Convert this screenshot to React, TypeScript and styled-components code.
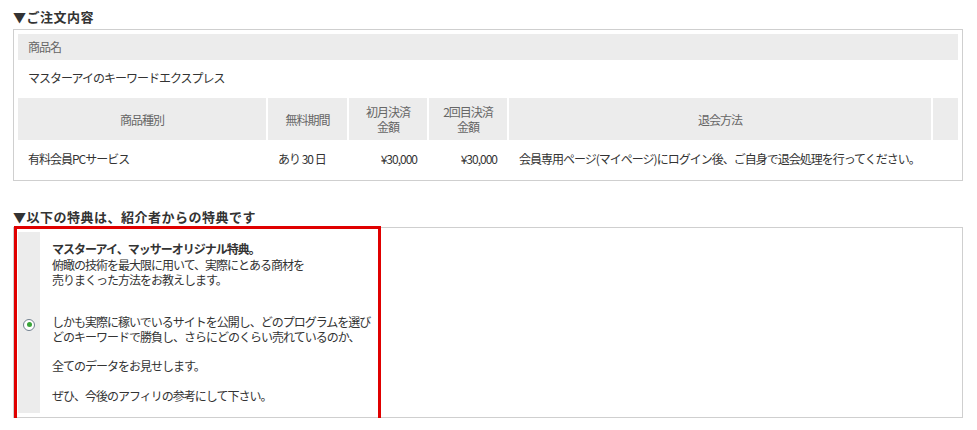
import React, { FC } from "react";
import styled, { createGlobalStyle } from "styled-components";

const GlobalStyle = createGlobalStyle`
  body {
    margin: 0;
    background: #fff;
    color: #333;
    font-family: "Noto Sans CJK JP", "Liberation Sans", sans-serif;
    font-size: 12px;
  }
`;

interface PlanRow {
  kind: string;
  free: string;
  first: string;
  second: string;
  cancel: string;
}

const plan: PlanRow = {
  kind: "有料会員PCサービス",
  free: "あり 30 日",
  first: "¥30,000",
  second: "¥30,000",
  cancel: "会員専用ページ(マイページ)にログイン後、ご自身で退会処理を行ってください。",
};

const Page = styled.div`
  width: 950px;
  padding: 9px 0 0 13px;
`;

const SectionTitle = styled.h2`
  margin: 0;
  height: 20px;
  font-size: 13px;
  line-height: 16px;
  font-weight: bold;
  letter-spacing: 0.5px;
  color: #333;
`;

const Box = styled.div`
  border: 1px solid #cfcfcf;
  padding: 4px;
`;

const OrderBox = styled(Box)`
  margin-bottom: 28px;
`;

const NameHead = styled.div`
  height: 26px;
  padding-left: 10px;
  background: #ececec;
  color: #666;
  line-height: 26px;
  letter-spacing: -1px;
`;

const NameValue = styled.div`
  height: 38px;
  padding-left: 10px;
  line-height: 36px;
  letter-spacing: -1px;
`;

const PlanGrid = styled.div`
  display: grid;
  grid-template-columns: 248px 79px 78px 78px 422px 1fr;
  column-gap: 2px;
`;

const HeadCell = styled.div`
  height: 42px;
  display: flex;
  align-items: center;
  justify-content: center;
  text-align: center;
  background: #ececec;
  color: #666;
  line-height: 15px;
  letter-spacing: -1px;
`;

const DataCell = styled.div<{ $right?: boolean }>`
  height: 36px;
  display: flex;
  align-items: center;
  justify-content: ${(p) => (p.$right ? "flex-end" : "flex-start")};
  padding: 0 10px;
  white-space: nowrap;
  letter-spacing: -1px;
`;

const PerkBox = styled(Box)`
  position: relative;
  margin-top: -2px;
`;

const PerkRow = styled.div`
  display: flex;
`;

const RadioCell = styled.div`
  width: 22px;
  flex-shrink: 0;
  display: flex;
  align-items: center;
  justify-content: center;
  background: #ececec;
`;

const Radio = styled.span`
  width: 12px;
  height: 12px;
  box-sizing: border-box;
  border: 1px solid #71808f;
  border-radius: 50%;
  background: #fff;
  display: flex;
  align-items: center;
  justify-content: center;
  margin-top: 4px;

  &::after {
    content: "";
    width: 5px;
    height: 5px;
    border-radius: 50%;
    background: #3aa53a;
  }
`;

const PerkText = styled.div`
  padding: 9px 0 10px 12px;
  line-height: 15px;
  letter-spacing: -1px;
`;

const Para = styled.p<{ $gap: number }>`
  margin: ${(p) => p.$gap}px 0 0;
`;

const Lead = styled.strong`
  display: block;
  line-height: 17px;
  margin-top: -1px;
`;

// red highlight drawn over the perk block
const Highlight = styled.div`
  position: absolute;
  box-sizing: border-box;
  left: 0;
  top: -2px;
  width: 367px;
  height: 198px;
  border: 3px solid #e00000;
  pointer-events: none;
`;

const App: FC = () => {
  return (
    <>
      <GlobalStyle />
      <Page>
        <SectionTitle>▼ご注文内容</SectionTitle>
        <OrderBox>
          <NameHead>商品名</NameHead>
          <NameValue>マスターアイのキーワードエクスプレス</NameValue>
          <PlanGrid>
            <HeadCell>商品種別</HeadCell>
            <HeadCell>無料期間</HeadCell>
            <HeadCell>
              初月決済
              <br />
              金額
            </HeadCell>
            <HeadCell>
              2回目決済
              <br />
              金額
            </HeadCell>
            <HeadCell>退会方法</HeadCell>
            <HeadCell />
            <DataCell>{plan.kind}</DataCell>
            <DataCell>{plan.free}</DataCell>
            <DataCell $right>{plan.first}</DataCell>
            <DataCell $right>{plan.second}</DataCell>
            <DataCell>{plan.cancel}</DataCell>
            <DataCell />
          </PlanGrid>
        </OrderBox>

        <SectionTitle>▼以下の特典は、紹介者からの特典です</SectionTitle>
        <PerkBox>
          <PerkRow>
            <RadioCell>
              <Radio />
            </RadioCell>
            <PerkText>
              <Para $gap={0}>
                <Lead>マスターアイ、マッサーオリジナル特典。</Lead>
                俯瞰の技術を最大限に用いて、実際にとある商材を
                <br />
                売りまくった方法をお教えします。
              </Para>
              <Para $gap={27}>
                しかも実際に稼いでいるサイトを公開し、どのプログラムを選び
                <br />
                どのキーワードで勝負し、さらにどのくらい売れているのか、
              </Para>
              <Para $gap={14}>全てのデータをお見せします。</Para>
              <Para $gap={15}>ぜひ、今後のアフィリの参考にして下さい。</Para>
            </PerkText>
          </PerkRow>
          <Highlight />
        </PerkBox>
      </Page>
    </>
  );
};

export default App;
